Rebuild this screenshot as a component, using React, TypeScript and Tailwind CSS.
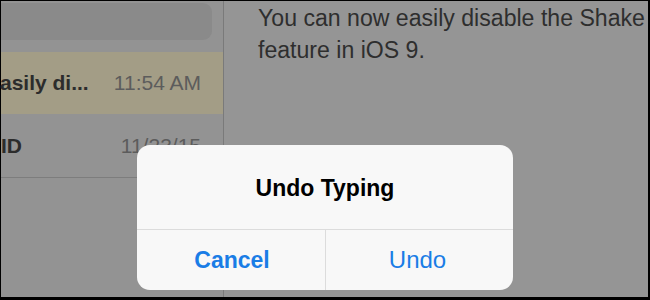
import React from "react";

const font = { fontFamily: '"Liberation Sans", Arial, sans-serif' };

const NoteRow = ({
	title,
	time,
	highlighted,
}: {
	title: string;
	time: string;
	highlighted?: boolean;
}) => (
	<div
		className={[
			"flex items-center justify-between h-[62px] pr-[22px] text-[21px]",
			highlighted ? "bg-[#a39d86]" : "",
		].join(" ")}
	>
		<span className="font-bold text-[#2c2c2c] -ml-px whitespace-nowrap">{title}</span>
		<span className="text-[#5c5c5c] whitespace-nowrap">{time}</span>
	</div>
);

export default function App() {
	return (
		<div
			className="relative w-[650px] h-[300px] bg-black pt-px pl-px pr-[2px] pb-[3px] overflow-hidden"
			style={font}
		>
			<div className="flex h-full w-full">
				{/* note list */}
				<div className="w-[222px] h-full bg-[#939393] flex flex-col">
					<div className="mt-[2px] h-[37px] w-[211px] rounded-r-[9px] bg-[#8a8a8a]" />
					<div className="h-[12px]" />
					<NoteRow title="asily di..." time="11:54 AM" highlighted />
					<div className="h-[63px] flex items-center justify-between pr-[22px] text-[21px]">
						<span className="font-bold text-[#2c2c2c] whitespace-nowrap">ID</span>
						<span className="text-[#5c5c5c] whitespace-nowrap">11/23/15</span>
					</div>
					<div className="h-px bg-[#7d7d7d]" />
				</div>
				<div className="w-px h-full bg-[#7a7a7a]" />
				{/* note body */}
				<div className="flex-1 h-full bg-[#959595] overflow-hidden pl-[34px] pt-px">
					<p className="text-[23.1px] leading-[32px] text-[#2e2e2e] whitespace-nowrap">
						You can now easily disable the Shake
					</p>
					<p className="text-[23.1px] leading-[32px] text-[#2e2e2e] whitespace-nowrap">
						feature in iOS 9.
					</p>
				</div>
			</div>

			{/* alert */}
			<div className="absolute left-[137px] top-[145px] w-[376px] h-[145px] rounded-[13px] bg-[#f8f8f8] flex flex-col overflow-hidden">
				<div className="h-[84px] flex items-center justify-center pt-[2px]">
					<span className="text-[23px] font-bold text-black">Undo Typing</span>
				</div>
				<div className="h-px bg-[#dcdcdc]" />
				<div className="flex flex-1">
					<button className="w-[188px] flex items-center justify-center text-[23px] font-bold text-[#1a7de6] pl-[2px]">
						Cancel
					</button>
					<div className="w-px bg-[#dcdcdc]" />
					<button className="flex-1 flex items-center justify-center text-[24px] text-[#1a7de6] pr-[4px]">
						Undo
					</button>
				</div>
			</div>
		</div>
	);
}
